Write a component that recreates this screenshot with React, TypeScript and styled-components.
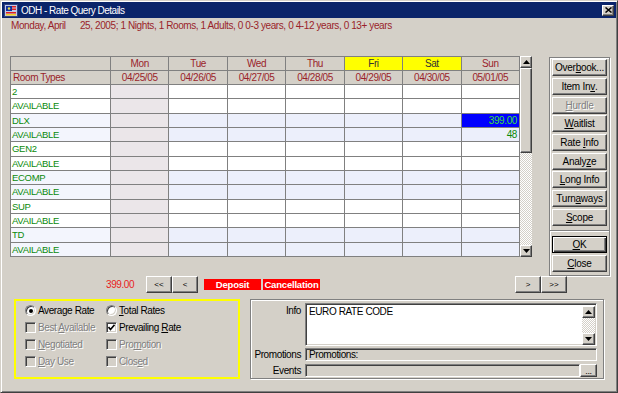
import styled, { createGlobalStyle, css } from "styled-components";

const GlobalStyle = createGlobalStyle`
  *, *::before, *::after { box-sizing: border-box; }
  html, body { margin: 0; padding: 0; background: #d4d0c8; }
  body {
    font-family: "Liberation Sans", Arial, sans-serif;
    font-size: 10px;
    letter-spacing: -0.4px;
    color: #000;
  }
`;

const raised = css`
  background: #d4d0c8;
  border: 1px solid;
  border-color: #fff #404040 #404040 #fff;
  box-shadow: inset -1px -1px #808080;
`;

const sunken = css`
  border: 1px solid;
  border-color: #808080 #fff #fff #808080;
  box-shadow: inset 1px 1px #404040, inset -1px -1px #d4d0c8;
`;

const dither = css`
  background: repeating-conic-gradient(#d4d0c8 0 25%, #fff 0 50%) 0 0 / 2px 2px;
`;

const DARK_RED = "#9a1f2a";
const GREEN = "#0a8a0a";

const Window = styled.div`
  width: 618px;
  height: 393px;
  background: #d4d0c8;
  border: 1px solid;
  border-color: #d4d0c8 #404040 #404040 #d4d0c8;
  box-shadow: inset 1px 1px #fff, inset -1px -1px #808080;
  padding: 1px;
  display: flex;
  flex-direction: column;
  overflow: hidden;
`;

const TitleBar = styled.div`
  height: 16px;
  background: #0a246a;
  color: #fff;
  display: flex;
  align-items: center;
  gap: 3px;
  padding: 0 2px 0 2px;
  font-size: 10px;
  letter-spacing: -0.5px;
`;

const TitleText = styled.span`
  flex: 1;
`;

const CloseBox = styled.div`
  ${raised};
  width: 12px;
  height: 11px;
  display: flex;
  align-items: center;
  justify-content: center;
`;

const Body = styled.div`
  flex: 1;
  display: flex;
  flex-direction: column;
  padding-left: 8px;
`;

const InfoLine = styled.div`
  margin-top: 1px;
  height: 14px;
  line-height: 14px;
  padding-left: 1px;
  color: ${DARK_RED};
  white-space: pre;
`;

const MainRow = styled.div`
  margin-top: 23px;
  display: flex;
  align-items: flex-start;
`;

const GridWrap = styled.div`
  display: flex;
`;

const RateGrid = styled.div`
  display: grid;
  width: 510px;
  height: 201px;
  grid-template-columns: 99px repeat(7, 1fr);
  grid-template-rows: 13px 13px repeat(12, 1fr);
  gap: 1px;
  padding: 1px;
  background: #808080;
`;

const HeadCell = styled.div<{ $yellow?: boolean; $left?: boolean }>`
  background: ${(p) => (p.$yellow ? "#ffff00" : "#d4d0c8")};
  color: ${(p) => (p.$yellow ? "#333" : DARK_RED)};
  text-align: ${(p) => (p.$left ? "left" : "center")};
  padding: 0 2px;
  line-height: 13px;
  white-space: nowrap;
  overflow: hidden;
`;

const TypeCell = styled.div<{ $shade?: boolean }>`
  background: ${(p) => (p.$shade ? "#f3f5fd" : "#fff")};
  color: ${GREEN};
  padding: 0 1px;
  font-size: 9.5px;
  letter-spacing: -0.3px;
  line-height: 14px;
  white-space: nowrap;
  overflow: hidden;
`;

const RateCell = styled.div<{ $shade?: boolean; $past?: boolean; $selected?: boolean }>`
  background: ${(p) =>
    p.$selected ? "#0000ff" : p.$past ? "#ebe6e9" : p.$shade ? "#eceffb" : "#fff"};
  color: ${(p) => (p.$selected ? "#3ade3a" : GREEN)};
  text-align: right;
  padding: 0 2px;
  line-height: 14px;
  white-space: nowrap;
  overflow: hidden;
`;

const VScroll = styled.div<{ $h: number; $w?: number }>`
  width: ${(p) => p.$w ?? 12}px;
  height: ${(p) => p.$h}px;
  display: flex;
  flex-direction: column;
`;

const ScrollBtn = styled.div<{ $h?: number }>`
  ${raised};
  height: ${(p) => p.$h ?? 12}px;
  flex: none;
  display: flex;
  align-items: center;
  justify-content: center;
`;

const Thumb = styled.div<{ $h: number }>`
  ${raised};
  height: ${(p) => p.$h}px;
  flex: none;
`;

const Track = styled.div`
  flex: 1;
  ${dither};
`;

const SidePanel = styled.div`
  margin-left: 17px;
  margin-top: 1px;
  width: 61px;
  height: 219px;
  border: 1px solid #808080;
  box-shadow: inset 1px 1px #fff, 1px 1px #fff;
  padding: 1.3px 2px 0 2px;
  display: flex;
  flex-direction: column;
`;

const ActionList = styled.div`
  display: flex;
  flex-direction: column;
  gap: 1.67px;
`;

const Separator = styled.div`
  margin: 4px -2px 4.7px;
  height: 2px;
  border-top: 1px solid #808080;
  border-bottom: 1px solid #fff;
`;

const PanelButton = styled.div<{ $disabled?: boolean; $default?: boolean }>`
  ${raised};
  height: 17px;
  width: 55px;
  display: flex;
  align-items: center;
  justify-content: center;
  white-space: pre;
  letter-spacing: -0.25px;
  color: ${(p) => (p.$disabled ? "#808080" : "#000")};
  text-shadow: ${(p) => (p.$disabled ? "1px 1px #fff" : "none")};
  ${(p) =>
    p.$default &&
    css`
      border-color: #000;
      box-shadow: inset 1px 1px #fff, inset -1px -1px #404040, inset -2px -2px #808080;
    `}
`;

const NavRow = styled.div`
  height: 17px;
  display: flex;
  align-items: center;
`;

const Amount = styled.span`
  margin-left: 96px;
  width: 34px;
  color: #e81c1c;
`;

const NavButton = styled.div<{ $gap?: number }>`
  ${raised};
  margin-left: ${(p) => p.$gap ?? 0}px;
  width: 26px;
  height: 17px;
  display: flex;
  align-items: center;
  justify-content: center;
  font-size: 8px;
  letter-spacing: 0;
`;

const Flag = styled.div<{ $w: number; $gap: number }>`
  margin-left: ${(p) => p.$gap}px;
  width: ${(p) => p.$w}px;
  height: 11px;
  background: #ff0000;
  color: #fff;
  font-weight: bold;
  font-size: 9.5px;
  letter-spacing: -0.2px;
  line-height: 11px;
  text-align: center;
  white-space: nowrap;
  overflow: hidden;
`;

const BottomRow = styled.div`
  margin-top: 6px;
  display: flex;
  align-items: flex-start;
`;

const RateOptions = styled.div`
  margin-left: 4px;
  width: 226px;
  height: 80px;
  border: 2px solid #ffff00;
  padding: 1px 0 0 9px;
  display: grid;
  grid-template-columns: 81px auto;
  grid-auto-rows: 17px;
`;

const Option = styled.label<{ $disabled?: boolean }>`
  display: flex;
  align-items: center;
  gap: 2px;
  white-space: nowrap;
  color: ${(p) => (p.$disabled ? "#808080" : "#000")};
  text-shadow: ${(p) => (p.$disabled ? "1px 1px #fff" : "none")};
`;

const Box = styled.span<{ $disabled?: boolean; $round?: boolean }>`
  ${sunken};
  width: 11px;
  height: 11px;
  flex: none;
  border-radius: ${(p) => (p.$round ? "50%" : "0")};
  background: ${(p) => (p.$disabled ? "#d4d0c8" : "#fff")};
  display: flex;
  align-items: center;
  justify-content: center;
`;

const Dot = styled.span`
  width: 4px;
  height: 4px;
  border-radius: 50%;
  background: #000;
`;

const InfoBox = styled.div`
  margin-left: 10px;
  width: 354px;
  height: 80px;
  border: 1px solid #808080;
  box-shadow: inset 1px 1px #fff, 1px 1px #fff;
  padding: 2.5px 6px 0 0;
  display: grid;
  grid-template-columns: 50px 1fr;
  grid-template-rows: 43px 13px 13px;
  column-gap: 4px;
  row-gap: 2.5px;
`;

const FieldLabel = styled.div<{ $top?: boolean }>`
  display: flex;
  justify-content: flex-end;
  align-items: ${(p) => (p.$top ? "flex-start" : "center")};
  padding-top: ${(p) => (p.$top ? "1px" : "0")};
  line-height: 13px;
`;

const TextArea = styled.div`
  ${sunken};
  background: #fff;
  display: flex;
  padding: 2px 1px 2px 3px;
`;

const AreaText = styled.div`
  flex: 1;
  line-height: 12px;
`;

const Field = styled.div`
  ${sunken};
  background: #d4d0c8;
  padding: 0 3px;
  line-height: 11px;
  white-space: nowrap;
  flex: 1;
`;

const EventsRow = styled.div`
  display: flex;
`;

const DotsButton = styled.div`
  ${raised};
  width: 17px;
  display: flex;
  align-items: flex-end;
  justify-content: center;
  font-size: 9px;
  line-height: 9px;
`;

function Mn({ text, at }: { text: string; at?: number }) {
  if (at === undefined) return <>{text}</>;
  return (
    <>
      {text.slice(0, at)}
      <u>{text[at]}</u>
      {text.slice(at + 1)}
    </>
  );
}

function Arrow({ up }: { up?: boolean }) {
  return (
    <svg width="7" height="4" viewBox="0 0 7 4">
      <polygon points={up ? "3.5,0 7,4 0,4" : "0,0 7,0 3.5,4"} fill="#000" />
    </svg>
  );
}

function Check() {
  return (
    <svg width="7" height="7" viewBox="0 0 7 7">
      <polyline points="0.5,3 2.5,5.5 6.5,0.8" fill="none" stroke="#000" strokeWidth="1.6" />
    </svg>
  );
}

function AppIcon() {
  return (
    <svg width="14" height="13" viewBox="0 0 14 13">
      <rect x="0.5" y="0.5" width="13" height="12" fill="#c0c8e8" stroke="#304080" />
      <rect x="2" y="2" width="6" height="5" fill="#1030a0" />
      <rect x="8" y="2" width="4" height="1.5" fill="#e02020" />
      <rect x="8" y="4.5" width="4" height="1.5" fill="#e02020" />
      <rect x="2" y="8" width="10" height="1.5" fill="#e02020" />
      <rect x="2" y="10" width="10" height="1.5" fill="#f0d020" />
      <circle cx="5" cy="4.5" r="1.2" fill="#f0e040" />
    </svg>
  );
}

const days = [
  { name: "Mon", date: "04/25/05" },
  { name: "Tue", date: "04/26/05" },
  { name: "Wed", date: "04/27/05" },
  { name: "Thu", date: "04/28/05" },
  { name: "Fri", date: "04/29/05", weekend: true },
  { name: "Sat", date: "04/30/05", weekend: true },
  { name: "Sun", date: "05/01/05" },
];

const roomRows = [
  { label: "2", shade: false },
  { label: "AVAILABLE", shade: false },
  { label: "DLX", shade: true, sun: "399.00", selected: true },
  { label: "AVAILABLE", shade: true, sun: "48" },
  { label: "GEN2", shade: false },
  { label: "AVAILABLE", shade: false },
  { label: "ECOMP", shade: true },
  { label: "AVAILABLE", shade: true },
  { label: "SUP", shade: false },
  { label: "AVAILABLE", shade: false },
  { label: "TD", shade: true },
  { label: "AVAILABLE", shade: true },
];

const actions: { text: string; at?: number; disabled?: boolean }[] = [
  { text: "Overbook...", at: 4 },
  { text: "Item Inv.", at: 7 },
  { text: "Hurdle", at: 0, disabled: true },
  { text: "Waitlist", at: 0 },
  { text: "Rate Info", at: 5 },
  { text: "Analyze", at: 5 },
  { text: "Long Info", at: 0 },
  { text: "Turnaways", at: 4 },
  { text: "Scope", at: 0 },
];

const options: { text: string; at?: number; kind: "radio" | "check"; on?: boolean; disabled?: boolean }[] = [
  { text: "Average Rate", kind: "radio", on: true },
  { text: "Total Rates", at: 0, kind: "radio" },
  { text: "Best Available", at: 5, kind: "check", disabled: true },
  { text: "Prevailing Rate", at: 11, kind: "check", on: true },
  { text: "Negotiated", at: 0, kind: "check", disabled: true },
  { text: "Promotion", at: 3, kind: "check", disabled: true },
  { text: "Day Use", at: 0, kind: "check", disabled: true },
  { text: "Closed", at: 4, kind: "check", disabled: true },
];

export default function App() {
  return (
    <>
      <GlobalStyle />
      <Window>
        <TitleBar>
          <AppIcon />
          <TitleText>ODH - Rate Query Details</TitleText>
          <CloseBox>
            <svg width="7" height="6" viewBox="0 0 7 6">
              <path d="M0.5 0.5 L6.5 5.5 M6.5 0.5 L0.5 5.5" stroke="#000" strokeWidth="1.5" />
            </svg>
          </CloseBox>
        </TitleBar>
        <Body>
          <InfoLine>
            {"Monday, April      25, 2005; 1 Nights, 1 Rooms, 1 Adults, 0 0-3 years, 0 4-12 years, 0 13+ years"}
          </InfoLine>
          <MainRow>
            <GridWrap>
              <RateGrid>
                <HeadCell />
                {days.map((d) => (
                  <HeadCell key={d.name} $yellow={d.weekend}>
                    {d.name}
                  </HeadCell>
                ))}
                <HeadCell $left>Room Types</HeadCell>
                {days.map((d) => (
                  <HeadCell key={d.date}>{d.date}</HeadCell>
                ))}
                {roomRows.map((r, i) => (
                  <>
                    <TypeCell key={`t${i}`} $shade={r.shade}>
                      {r.label}
                    </TypeCell>
                    {days.map((d, j) => (
                      <RateCell
                        key={`c${i}-${j}`}
                        $shade={r.shade}
                        $past={j === 0}
                        $selected={j === 6 && r.selected}
                      >
                        {j === 6 ? r.sun : null}
                      </RateCell>
                    ))}
                  </>
                ))}
              </RateGrid>
              <VScroll $h={201}>
                <ScrollBtn>
                  <Arrow up />
                </ScrollBtn>
                <Thumb $h={85} />
                <Track />
                <ScrollBtn>
                  <Arrow />
                </ScrollBtn>
              </VScroll>
            </GridWrap>
            <SidePanel>
              <ActionList>
                {actions.map((a) => (
                  <PanelButton key={a.text} $disabled={a.disabled}>
                    <Mn text={a.text} at={a.at} />
                  </PanelButton>
                ))}
              </ActionList>
              <Separator />
              <ActionList>
                <PanelButton $default>
                  <Mn text="OK" at={0} />
                </PanelButton>
                <PanelButton>
                  <Mn text="Close" at={0} />
                </PanelButton>
              </ActionList>
            </SidePanel>
          </MainRow>
          <NavRow>
            <Amount>399.00</Amount>
            <NavButton $gap={6}>&lt;&lt;</NavButton>
            <NavButton>&lt;</NavButton>
            <Flag $w={57} $gap={6}>
              Deposit
            </Flag>
            <Flag $w={57} $gap={2}>
              Cancellation
            </Flag>
            <NavButton $gap={195}>&gt;</NavButton>
            <NavButton>&gt;&gt;</NavButton>
          </NavRow>
          <BottomRow>
            <RateOptions>
              {options.map((o) => (
                <Option key={o.text} $disabled={o.disabled}>
                  <Box $round={o.kind === "radio"} $disabled={o.disabled}>
                    {o.on && (o.kind === "radio" ? <Dot /> : <Check />)}
                  </Box>
                  <span>
                    <Mn text={o.text} at={o.at} />
                  </span>
                </Option>
              ))}
            </RateOptions>
            <InfoBox>
              <FieldLabel $top>Info</FieldLabel>
              <TextArea>
                <AreaText>EURO RATE CODE</AreaText>
                <VScroll $h={39} $w={13}>
                  <ScrollBtn>
                    <Arrow up />
                  </ScrollBtn>
                  <Track />
                  <ScrollBtn>
                    <Arrow />
                  </ScrollBtn>
                </VScroll>
              </TextArea>
              <FieldLabel>Promotions</FieldLabel>
              <EventsRow>
                <Field>Promotions:</Field>
              </EventsRow>
              <FieldLabel>Events</FieldLabel>
              <EventsRow>
                <Field />
                <DotsButton>...</DotsButton>
              </EventsRow>
            </InfoBox>
          </BottomRow>
        </Body>
      </Window>
    </>
  );
}
